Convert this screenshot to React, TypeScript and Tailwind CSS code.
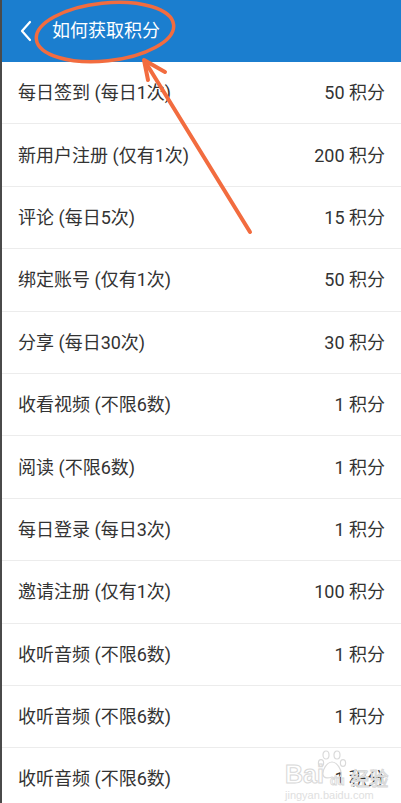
import React from 'react';

const rows: { label: string; points: string }[] = [
    { label: '每日签到 (每日1次)', points: '50 积分' },
    { label: '新用户注册 (仅有1次)', points: '200 积分' },
    { label: '评论 (每日5次)', points: '15 积分' },
    { label: '绑定账号 (仅有1次)', points: '50 积分' },
    { label: '分享 (每日30次)', points: '30 积分' },
    { label: '收看视频 (不限6数)', points: '1 积分' },
    { label: '阅读 (不限6数)', points: '1 积分' },
    { label: '每日登录 (每日3次)', points: '1 积分' },
    { label: '邀请注册 (仅有1次)', points: '100 积分' },
    { label: '收听音频 (不限6数)', points: '1 积分' },
    { label: '收听音频 (不限6数)', points: '1 积分' },
    { label: '收听音频 (不限6数)', points: '1 积分' },
];

const font = { fontFamily: 'Roboto, "Noto Sans CJK SC", sans-serif' };

const Header: React.FC = () => (
    <div className="h-[62px] bg-[#1b7ecf] flex items-center pl-[17px]">
        <svg width="14" height="22" viewBox="0 0 14 22" className="shrink-0">
            <path d="M11 2 L3 11 L11 20" fill="none" stroke="white" strokeWidth="2.2" strokeLinecap="round" strokeLinejoin="round" />
        </svg>
        <span className="ml-[19px] text-white text-[18px] leading-none">如何获取积分</span>
    </div>
);

const Annotation: React.FC = () => (
    <svg className="absolute inset-0 pointer-events-none" width="401" height="803" viewBox="0 0 401 803">
        <ellipse cx="103" cy="32" rx="69" ry="29" transform="rotate(-6 103 32)" fill="none" stroke="#f26c3f" strokeWidth="3.5" />
        <line x1="248" y1="232" x2="144" y2="63" stroke="#f26c3f" strokeWidth="4" strokeLinecap="round" />
        <polyline points="163,72 142,60 146,80" fill="none" stroke="#f26c3f" strokeWidth="4" strokeLinecap="round" strokeLinejoin="round" />
    </svg>
);

const Paw: React.FC = () => (
    <svg width="30" height="34" viewBox="0 0 30 34" className="absolute left-[32px] top-[-14px]">
        <g fill="none" stroke="#dadada" strokeWidth="1.2">
            <ellipse cx="9" cy="7" rx="3" ry="4" />
            <ellipse cx="20" cy="7" rx="3" ry="4" />
            <ellipse cx="4" cy="15" rx="2.6" ry="3.4" />
            <ellipse cx="26" cy="15" rx="2.6" ry="3.4" />
            <path d="M15 14 C10 14 5 22 6 27 C7 31 12 30 15 29 C18 30 23 31 24 27 C25 22 20 14 15 14 Z" />
        </g>
    </svg>
);

const Watermark: React.FC = () => (
    <div className="absolute left-[283px] top-[762px] pointer-events-none select-none" style={{ fontFamily: '"Liberation Sans", sans-serif' }}>
        <div className="relative flex items-end leading-none">
            <Paw />
            <span className="text-[25px] font-bold text-white [-webkit-text-stroke:1px_#d8d8d8]">Bai</span>
            <span className="text-[12px] font-bold ml-[6px] text-white [-webkit-text-stroke:0.8px_#d8d8d8]">du</span>
            <span className="text-[19px] ml-[6px] text-white [-webkit-text-stroke:1px_#d8d8d8]" style={{ fontFamily: '"Noto Sans CJK SC", sans-serif' }}>经验</span>
        </div>
        <div className="text-[11px] leading-none mt-[3px] text-[#e0e0e0]">jingyan.baidu.com</div>
    </div>
);

export default function App() {
    return (
        <div className="relative w-[401px] h-[803px] overflow-hidden bg-white border-l-2 border-[#4a4a4a]" style={font}>
            <Header />
            <div>
                {rows.map((row, i) => (
                    <div key={i} className="h-[62.4px] border-b border-[#ececec] flex items-center justify-between pl-[16px] pr-[16px] text-[#333333] text-[18px]">
                        <span>{row.label}</span>
                        <span>{row.points}</span>
                    </div>
                ))}
            </div>
            <Watermark />
            <Annotation />
        </div>
    );
}
